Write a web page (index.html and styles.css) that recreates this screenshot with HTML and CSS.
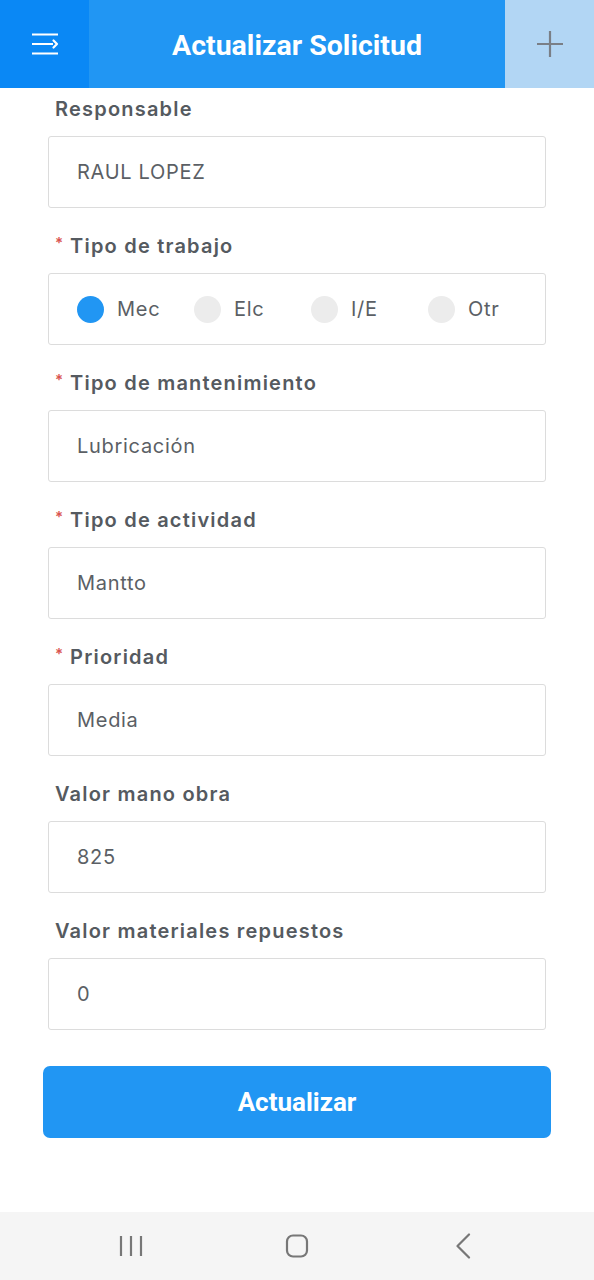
FILE: index.html
```html
<!DOCTYPE html>
<html lang="es">
<head>
<meta charset="utf-8">
<title>Actualizar Solicitud</title>
<link rel="stylesheet" href="styles.css">
</head>
<body>
<div class="screen">
  <header class="topbar">
    <div class="menu-btn">
      <svg width="28" height="24" viewBox="0 0 28 24">
        <path d="M1 2.5H27M1 12H22M1 21.5H27" stroke="#fff" stroke-width="2.2" fill="none"/>
        <path d="M22.5 8.5L26 12L22.5 15.5" stroke="#fff" stroke-width="2.2" fill="none" stroke-linecap="round" stroke-linejoin="round"/>
      </svg>
    </div>
    <h1 class="title">Actualizar Solicitud</h1>
    <div class="add-btn">
      <svg width="28" height="28" viewBox="0 0 28 28">
        <path d="M14 1V27M1 14H27" stroke="#7a7f86" stroke-width="2.2" fill="none"/>
      </svg>
    </div>
  </header>

  <main class="form">
    <div class="field">
      <div class="label">Responsable</div>
      <div class="box">RAUL LOPEZ</div>
    </div>
    <div class="field">
      <div class="label"><span class="req">*</span>Tipo de trabajo</div>
      <div class="box radios">
        <div class="radio"><span class="dot on"></span>Mec</div>
        <div class="radio"><span class="dot"></span>Elc</div>
        <div class="radio"><span class="dot"></span>I/E</div>
        <div class="radio"><span class="dot"></span>Otr</div>
      </div>
    </div>
    <div class="field">
      <div class="label"><span class="req">*</span>Tipo de mantenimiento</div>
      <div class="box">Lubricación</div>
    </div>
    <div class="field">
      <div class="label"><span class="req">*</span>Tipo de actividad</div>
      <div class="box">Mantto</div>
    </div>
    <div class="field">
      <div class="label"><span class="req">*</span>Prioridad</div>
      <div class="box">Media</div>
    </div>
    <div class="field">
      <div class="label">Valor mano obra</div>
      <div class="box">825</div>
    </div>
    <div class="field">
      <div class="label">Valor materiales repuestos</div>
      <div class="box">0</div>
    </div>
    <button class="submit">Actualizar</button>
  </main>

  <nav class="navbar">
    <svg width="24" height="24" viewBox="0 0 24 24">
      <path d="M2 2V22M12 2V22M22 2V22" stroke="#777" stroke-width="2.2" fill="none"/>
    </svg>
    <svg width="24" height="24" viewBox="0 0 24 24">
      <rect x="2" y="1.5" width="20" height="21" rx="6" stroke="#777" stroke-width="2.2" fill="none"/>
    </svg>
    <svg width="24" height="26" viewBox="0 0 24 26">
      <path d="M18 1.5L6.5 13L18 24.5" stroke="#777" stroke-width="2.2" fill="none" stroke-linecap="round" stroke-linejoin="round"/>
    </svg>
  </nav>
</div>
</body>
</html>
```
FILE: styles.css
```css
* { box-sizing: border-box; }
html, body { margin: 0; padding: 0; background: #fff; }
.screen {
  width: 594px;
  height: 1280px;
  display: flex;
  flex-direction: column;
  font-family: "Inter", "Noto Sans", sans-serif;
}
.topbar {
  height: 88px;
  display: flex;
  background: #2196f3;
  flex-shrink: 0;
}
.menu-btn {
  width: 89px;
  background: #0a88f5;
  display: flex;
  align-items: center;
  justify-content: center;
}
.title {
  flex: 1;
  margin: 0;
  display: flex;
  align-items: center;
  justify-content: center;
  color: #fff;
  font-family: "Roboto", sans-serif;
  font-weight: 700;
  font-size: 28.5px;
  padding-top: 3px;
}
.add-btn {
  width: 89px;
  background: #b2d6f4;
  display: flex;
  align-items: center;
  justify-content: center;
}
.form {
  flex: 1;
  padding: 7px 48px 0 48px;
  display: flex;
  flex-direction: column;
}
.field {
  display: flex;
  flex-direction: column;
  gap: 13px;
  margin-bottom: 24px;
}
.label {
  height: 28px;
  line-height: 28px;
  padding-left: 7px;
  font-size: 20px;
  font-weight: 600;
  letter-spacing: 1.2px;
  color: #555a60;
  display: flex;
  align-items: center;
}
.req {
  color: #d9534f;
  font-size: 15px;
  margin-right: 7px;
  margin-top: -6px;
  letter-spacing: 0;
}
.box {
  height: 72px;
  border: 1px solid #dcdcdc;
  border-radius: 3px;
  padding-left: 28px;
  display: flex;
  align-items: center;
  font-size: 20px;
  letter-spacing: 0.7px;
  color: #5b5f65;
}
.radios {
  padding-left: 28px;
}
.radio {
  width: 117px;
  display: flex;
  align-items: center;
  gap: 13px;
}
.dot {
  width: 27px;
  height: 27px;
  border-radius: 50%;
  background: #ececec;
}
.dot.on { background: #2196f3; }
.submit {
  margin: 12px -5px 0 -5px;
  height: 72px;
  border: none;
  border-radius: 7px;
  background: #2196f3;
  color: #fff;
  font-family: "Roboto", sans-serif;
  font-weight: 700;
  font-size: 26px;
}
.navbar {
  height: 68px;
  background: #f5f5f5;
  display: flex;
  align-items: center;
  justify-content: center;
  gap: 142px;
  flex-shrink: 0;
}
```
